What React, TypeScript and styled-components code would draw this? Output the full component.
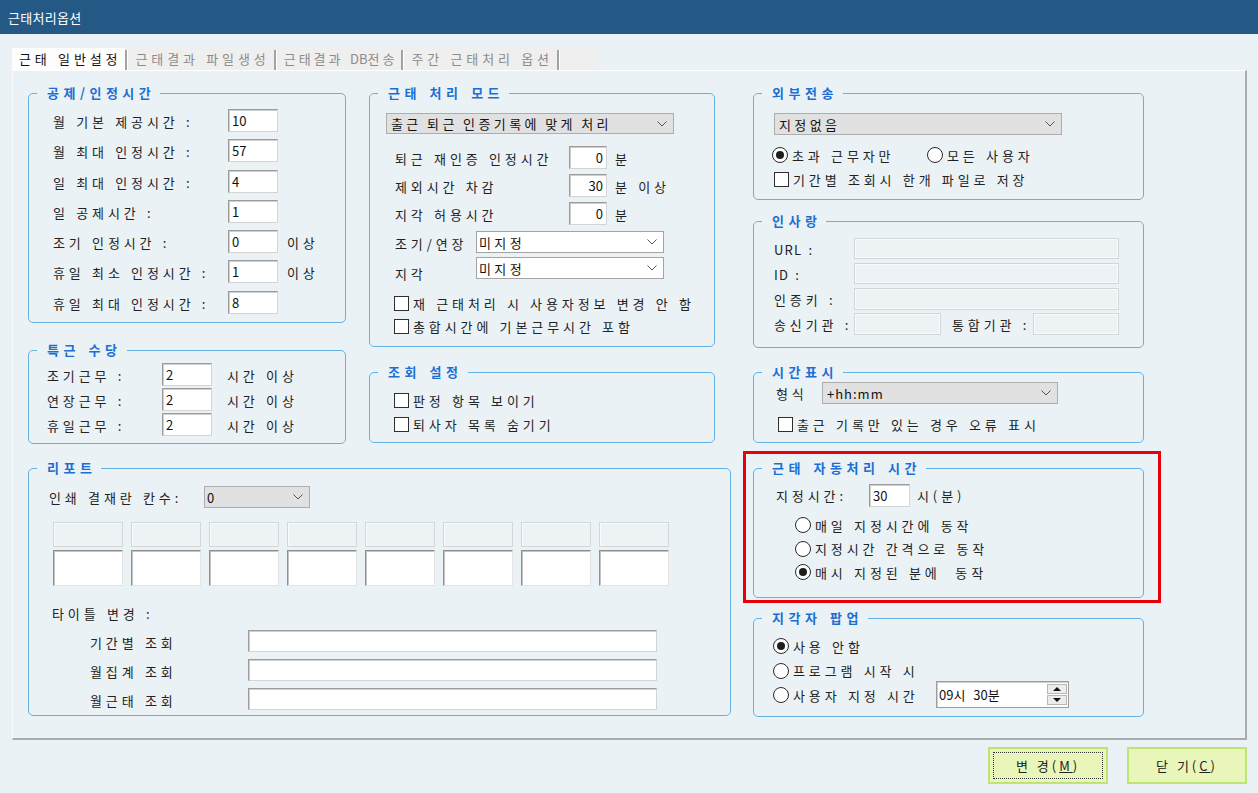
import React from "react";
import styled, { createGlobalStyle } from "styled-components";

const FONT = `"Noto Sans CJK KR", "Noto Sans", sans-serif`;

const GlobalStyle = createGlobalStyle`
  html, body { margin: 0; padding: 0; background: #ebf2f6; }
  body { font-family: ${FONT}; font-size: 13px; color: #222; }
  * { box-sizing: border-box; }
`;

const Window = styled.div`
  width: 1258px;
  height: 793px;
  display: flex;
  flex-direction: column;
  background: #ebf2f6;
  overflow: hidden;
`;

const TitleBar = styled.div`
  height: 34px;
  flex: none;
  background: #245985;
  color: #fff;
  display: flex;
  align-items: center;
  padding-left: 8px;
  font-size: 13px;
  letter-spacing: 0.3px;
`;

const Body = styled.div`
  flex: 1;
  display: flex;
  flex-direction: column;
  padding: 14px 11px 0 12px;
`;

const TabStrip = styled.div`
  display: flex;
  align-items: stretch;
  height: 22px;
  width: 585px;
  background: #efefef;
`;

const Tab = styled.div<{ $active?: boolean; $ls?: number }>`
  display: block;
  line-height: 22px;
  padding: 0 4px 0 7px;
  letter-spacing: ${(p) => p.$ls ?? 3.9}px;
  word-spacing: 0.5px;
  white-space: nowrap;
  color: ${(p) => (p.$active ? "#111" : "#8c8c8c")};
  background: ${(p) => (p.$active ? "#fdfdfd" : "transparent")};
`;

const Latin = styled.span`
  letter-spacing: 0;
`;

const TabSep = styled.div`
  width: 3px;
  margin-top: 2px;
  border-left: 2px solid #a3a3a3;
  border-right: 1px solid #fff;
`;

const Panel = styled.div`
  height: 670px;
  display: flex;
  align-items: flex-start;
  gap: 22px;
  padding: 14px 0 0 15px;
  border-top: 1px solid #fff;
  border-left: 1px solid #f7f9fa;
  border-right: 2px solid #a8acaf;
  border-bottom: 2px solid #a8acaf;
`;

const LeftArea = styled.div`
  width: 703px;
  display: flex;
  flex-direction: column;
  gap: 16px;
`;

const TopRow = styled.div`
  display: flex;
  align-items: flex-start;
  gap: 23px;
`;

const Stack = styled.div<{ $w: number }>`
  width: ${(p) => p.$w}px;
  display: flex;
  flex-direction: column;
`;

const Group = styled.fieldset<{ $h: number; $mt?: number }>`
  margin: ${(p) => p.$mt ?? 0}px 0 0 0;
  padding: 0;
  min-width: 0;
  height: ${(p) => p.$h}px;
  border: 1px solid #63b2e2;
  border-radius: 5px;
`;

const Legend = styled.legend`
  margin-left: 8px;
  padding: 0 5px 0 10px;
  font-size: 13px;
  line-height: 16px;
  font-weight: bold;
  color: #1b6fd3;
  letter-spacing: 4.5px;
  word-spacing: 1.2px;
  white-space: nowrap;
`;

const FormGrid = styled.div<{ $cols: string; $rowH: number; $gap: number; $pad?: string; $mt?: number }>`
  display: grid;
  grid-template-columns: ${(p) => p.$cols};
  grid-auto-rows: ${(p) => p.$rowH}px;
  row-gap: ${(p) => p.$gap}px;
  align-items: center;
  padding: ${(p) => p.$pad ?? "0"};
  margin-top: ${(p) => p.$mt ?? 0}px;
`;

const Text = styled.span`
  font-size: 13px;
  letter-spacing: 3.9px;
  word-spacing: 0.5px;
  white-space: nowrap;
  color: #222;
`;

const Label = styled(Text)<{ $low?: number }>`
  padding-top: ${(p) => p.$low ?? 2}px;
`;

const LatinLabel = styled(Label)`
  letter-spacing: 1.2px;
  word-spacing: 2px;
`;

const Suffix = styled(Text)<{ $ml: number }>`
  margin-left: ${(p) => p.$ml}px;
  align-self: end;
  padding-bottom: 1px;
`;

const Input = styled.input<{ $w: number; $h: number; $right?: boolean }>`
  width: ${(p) => p.$w}px;
  height: ${(p) => p.$h}px;
  margin: 0;
  padding: 0 3px;
  font: 13px ${FONT};
  color: #111;
  text-align: ${(p) => (p.$right ? "right" : "left")};
  background: #fff;
  border: 1px solid;
  border-color: #9b9b9b #d4d4d4 #d4d4d4 #9b9b9b;
  box-shadow: inset 1px 1px 0 #cfcfcf;
  outline: none;
`;

const DisabledBox = styled.div<{ $w: number; $h: number }>`
  width: ${(p) => p.$w}px;
  height: ${(p) => p.$h}px;
  background: #edf2f5;
  border: 1px solid #d2d6d9;
  box-shadow: inset 1px 1px 0 #f8fafb, inset -1px -1px 0 #f8fafb;
`;

const Combo = styled.div<{ $w: number; $h: number; $white?: boolean; $pl?: number }>`
  width: ${(p) => p.$w}px;
  height: ${(p) => p.$h}px;
  display: flex;
  align-items: center;
  justify-content: space-between;
  padding: 0 6px 0 ${(p) => p.$pl ?? 4}px;
  background: ${(p) => (p.$white ? "#fff" : "#e1e1e1")};
  border: 1px solid ${(p) => (p.$white ? "#a3a3a3" : "#adadad")};
`;

const ComboText = styled.span`
  font-size: 13px;
  letter-spacing: 3.4px;
  word-spacing: -1px;
  white-space: nowrap;
  color: #111;
`;

const Chevron = () => (
  <svg width="10" height="6" viewBox="0 0 10 6">
    <polyline points="0.5,0.5 5,5 9.5,0.5" fill="none" stroke="#555" strokeWidth="1" />
  </svg>
);

const Section = styled.div<{ $pad: string }>`
  display: flex;
  flex-direction: column;
  align-items: flex-start;
  padding: ${(p) => p.$pad};
`;

const OptionList = styled.div<{ $gap: number; $mt: number; $ml?: number }>`
  display: flex;
  flex-direction: column;
  gap: ${(p) => p.$gap}px;
  margin-top: ${(p) => p.$mt}px;
  margin-left: ${(p) => p.$ml ?? 0}px;
`;

const OptionRow = styled.div`
  display: flex;
  align-items: center;
`;

const Option = styled.label<{ $w?: number }>`
  display: flex;
  align-items: center;
  gap: 4px;
  width: ${(p) => (p.$w ? `${p.$w}px` : "auto")};
  height: 16px;
`;

const CheckBox = styled.span`
  width: 15px;
  height: 15px;
  flex: none;
  background: #fff;
  border: 1px solid #2e2e2e;
`;

const RadioDot = styled.span<{ $on?: boolean }>`
  width: 16px;
  height: 16px;
  flex: none;
  border-radius: 50%;
  background: #fff;
  border: 1px solid #2a2a2a;
  display: flex;
  align-items: center;
  justify-content: center;
  &::after {
    content: "";
    width: 8px;
    height: 8px;
    border-radius: 50%;
    background: ${(p) => (p.$on ? "#1e1e1e" : "transparent")};
  }
`;

const InlineRow = styled.div<{ $mt?: number; $ml?: number }>`
  display: flex;
  align-items: center;
  margin-top: ${(p) => p.$mt ?? 0}px;
  margin-left: ${(p) => p.$ml ?? 0}px;
`;

const FixedLabel = styled(Text)<{ $w: number }>`
  width: ${(p) => p.$w}px;
  flex: none;
`;

const CellGrid = styled.div`
  display: grid;
  grid-template-columns: repeat(8, 70px);
  grid-template-rows: 25px 36px;
  column-gap: 8px;
  row-gap: 3px;
  margin: 14px 0 0 24px;
`;

const HeadCell = styled.div`
  background: #edf2f5;
  border: 1px solid #d3d7da;
  box-shadow: inset 1px 1px 0 #f9fbfc;
`;

const BoxCell = styled.div`
  background: #fff;
  border: 1px solid;
  border-color: #8f8f8f #e4e4e4 #e4e4e4 #8f8f8f;
  box-shadow: inset 1px 1px 0 #c4c4c4;
`;

const AutoWrap = styled.div`
  position: relative;
  margin-top: 17px;
`;

const RedMark = styled.div`
  position: absolute;
  top: -9px;
  left: -10px;
  right: -17px;
  bottom: -5px;
  border: 3px solid #e8000b;
  pointer-events: none;
`;

const Spin = styled.div`
  width: 133px;
  height: 27px;
  margin: -6px 0 -5px;
  display: flex;
  background: #fff;
  border: 1px solid #9c9c9c;
  box-shadow: inset 1px 1px 0 #d0d0d0;
`;

const SpinText = styled.span`
  flex: 1;
  padding-left: 2px;
  font-size: 13px;
  word-spacing: 5px;
  color: #111;
  display: flex;
  align-items: center;
`;

const SpinButtons = styled.div`
  width: 20px;
  display: flex;
  flex-direction: column;
  gap: 1px;
  margin: 2px 1px 2px 0;
`;

const SpinBtn = styled.div`
  flex: 1;
  background: #ececec;
  border: 1px solid #b8b8b8;
  display: flex;
  align-items: center;
  justify-content: center;
`;

const ButtonRow = styled.div`
  display: flex;
  justify-content: flex-end;
  gap: 19px;
  margin-top: 7px;
`;

const DlgButton = styled.button<{ $focus?: boolean }>`
  width: 120px;
  height: 37px;
  margin: 0;
  padding: 0;
  font: 13px ${FONT};
  letter-spacing: 3px;
  color: #222;
  background: #e8f6ba;
  border: 2px solid #bfe474;
  outline: ${(p) => (p.$focus ? "1px dotted #333" : "none")};
  outline-offset: -6px;
`;

const numRows1: [string, string, string?][] = [
  ["월 기본 제공시간 :", "10"],
  ["월 최대 인정시간 :", "57"],
  ["일 최대 인정시간 :", "4"],
  ["일 공제시간 :", "1"],
  ["조기 인정시간 :", "0", "이상"],
  ["휴일 최소 인정시간 :", "1", "이상"],
  ["휴일 최대 인정시간 :", "8"],
];

const bonusRows = ["조기근무 :", "연장근무 :", "휴일근무 :"];

const modeRows: [string, string, string][] = [
  ["퇴근 재인증 인정시간", "0", "분"],
  ["제외시간 차감", "30", "분 이상"],
  ["지각 허용시간", "0", "분"],
];

const titleRows = ["기간별 조회", "월집계 조회", "월근태 조회"];

const Check = ({ children }: { children: React.ReactNode }) => (
  <Option>
    <CheckBox />
    <Text>{children}</Text>
  </Option>
);

const Radio = ({ on, w, children }: { on?: boolean; w?: number; children: React.ReactNode }) => (
  <Option $w={w}>
    <RadioDot $on={on} />
    <Text>{children}</Text>
  </Option>
);

export default function App() {
  return (
    <>
      <GlobalStyle />
      <Window>
        <TitleBar>근태처리옵션</TitleBar>
        <Body>
          <TabStrip>
            <Tab $active>근태 일반설정</Tab>
            <TabSep />
            <Tab>근태결과 파일생성</Tab>
            <TabSep />
            <Tab $ls={3}>
              근태결과 <Latin>DB</Latin>전송
            </Tab>
            <TabSep />
            <Tab>주간 근태처리 옵션</Tab>
            <TabSep />
          </TabStrip>
          <Panel>
            <LeftArea>
              <TopRow>
                <Stack $w={318}>
                  <Group $h={238}>
                    <Legend>공제/인정시간</Legend>
                    <FormGrid $cols="175px 50px auto" $rowH={23} $gap={7.3} $pad="8px 0 0 24px">
                      {numRows1.map(([l, v, s]) => (
                        <React.Fragment key={l}>
                          <Label>{l}</Label>
                          <Input $w={50} $h={23} defaultValue={v} readOnly />
                          {s ? <Suffix $ml={9}>{s}</Suffix> : <span />}
                        </React.Fragment>
                      ))}
                    </FormGrid>
                  </Group>
                  <Group $h={102} $mt={19}>
                    <Legend>특근 수당</Legend>
                    <FormGrid $cols="115px 50px auto" $rowH={23} $gap={2} $pad="5px 0 0 18px">
                      {bonusRows.map((l) => (
                        <React.Fragment key={l}>
                          <Label>{l}</Label>
                          <Input $w={50} $h={23} defaultValue="2" readOnly />
                          <Label $low={1} style={{ marginLeft: 15 }}>시간 이상</Label>
                        </React.Fragment>
                      ))}
                    </FormGrid>
                  </Group>
                </Stack>
                <Stack $w={346}>
                  <Group $h={262}>
                    <Legend>근태 처리 모드</Legend>
                    <Section $pad="12px 0 0 16px">
                      <Combo $w={288} $h={21}>
                        <ComboText>출근 퇴근 인증기록에 맞게 처리</ComboText>
                        <Chevron />
                      </Combo>
                      <FormGrid $cols="174px 38px auto" $rowH={23} $gap={5} $pad="0 0 0 9px" $mt={12}>
                        {modeRows.map(([l, v, s]) => (
                          <React.Fragment key={l}>
                            <Label>{l}</Label>
                            <Input $w={38} $h={23} $right defaultValue={v} readOnly />
                            <Label style={{ marginLeft: 8 }}>{s}</Label>
                          </React.Fragment>
                        ))}
                      </FormGrid>
                      <FormGrid $cols="81px 188px" $rowH={22} $gap={4} $pad="0 0 0 9px" $mt={6}>
                        <Label style={{ alignSelf: "end" }}>조기/연장</Label>
                        <Combo $w={188} $h={22} $white $pl={2}>
                          <ComboText>미지정</ComboText>
                          <Chevron />
                        </Combo>
                        <Label style={{ alignSelf: "end", marginBottom: -4 }}>지각</Label>
                        <Combo $w={188} $h={22} $white $pl={2}>
                          <ComboText>미지정</ComboText>
                          <Chevron />
                        </Combo>
                      </FormGrid>
                      <OptionList $gap={7} $mt={16} $ml={8}>
                        <Check>재 근태처리 시 사용자정보 변경 안 함</Check>
                        <Check>총합시간에 기본근무시간 포함</Check>
                      </OptionList>
                    </Section>
                  </Group>
                  <Group $h={79} $mt={17}>
                    <Legend>조회 설정</Legend>
                    <Section $pad="4px 0 0 24px">
                      <OptionList $gap={8} $mt={8}>
                        <Check>판정 항목 보이기</Check>
                        <Check>퇴사자 목록 숨기기</Check>
                      </OptionList>
                    </Section>
                  </Group>
                </Stack>
              </TopRow>
              <Group $h={256}>
                <Legend>리포트</Legend>
                <Section $pad="10px 0 0 0">
                  <InlineRow $ml={20}>
                    <FixedLabel $w={155}>인쇄 결재란 칸수:</FixedLabel>
                    <Combo $w={106} $h={22} $pl={2}>
                      <ComboText>0</ComboText>
                      <Chevron />
                    </Combo>
                  </InlineRow>
                  <CellGrid>
                    {Array.from({ length: 8 }).map((_, i) => (
                      <HeadCell key={`h${i}`} />
                    ))}
                    {Array.from({ length: 8 }).map((_, i) => (
                      <BoxCell key={`b${i}`} />
                    ))}
                  </CellGrid>
                  <InlineRow $mt={18} $ml={23}>
                    <Text>타이틀 변경 :</Text>
                  </InlineRow>
                  <FormGrid $cols="158px 409px" $rowH={22} $gap={7} $pad="0 0 0 61px" $mt={7}>
                    {titleRows.map((l) => (
                      <React.Fragment key={l}>
                        <Label>{l}</Label>
                        <Input $w={409} $h={22} readOnly />
                      </React.Fragment>
                    ))}
                  </FormGrid>
                </Section>
              </Group>
            </LeftArea>

            <Stack $w={391}>
              <Group $h={115}>
                <Legend>외부전송</Legend>
                <Section $pad="12px 0 0 20px">
                  <Combo $w={288} $h={22}>
                    <ComboText>지정없음</ComboText>
                    <Chevron />
                  </Combo>
                  <InlineRow $mt={12} $ml={-2}>
                    <Radio on w={155}>초과 근무자만</Radio>
                    <Radio>모든 사용자</Radio>
                  </InlineRow>
                  <OptionList $gap={0} $mt={8}>
                    <Check>기간별 조회시 한개 파일로 저장</Check>
                  </OptionList>
                </Section>
              </Group>
              <Group $h={135} $mt={13}>
                <Legend>인사랑</Legend>
                <Section $pad="9px 0 0 20px">
                  <FormGrid $cols="80px 265px" $rowH={21} $gap={4}>
                    <LatinLabel>URL :</LatinLabel>
                    <DisabledBox $w={265} $h={21} />
                    <LatinLabel>ID :</LatinLabel>
                    <DisabledBox $w={265} $h={21} />
                    <Label>인증키 :</Label>
                    <DisabledBox $w={265} $h={22} />
                  </FormGrid>
                  <InlineRow $mt={4}>
                    <FixedLabel $w={80}>송신기관 :</FixedLabel>
                    <DisabledBox $w={87} $h={22} />
                    <FixedLabel $w={81} style={{ marginLeft: 11 }}>통합기관 :</FixedLabel>
                    <DisabledBox $w={86} $h={22} />
                  </InlineRow>
                </Section>
              </Group>
              <Group $h={79} $mt={16}>
                <Legend>시간표시</Legend>
                <Section $pad="2px 0 0 22px">
                  <InlineRow>
                    <FixedLabel $w={46}>형식</FixedLabel>
                    <Combo $w={236} $h={22}>
                      <ComboText style={{ letterSpacing: 1 }}>+hh:mm</ComboText>
                      <Chevron />
                    </Combo>
                  </InlineRow>
                  <OptionList $gap={0} $mt={12} $ml={2}>
                    <Check>출근 기록만 있는 경우 오류 표시</Check>
                  </OptionList>
                </Section>
              </Group>
              <AutoWrap>
                <Group $h={138}>
                  <Legend>근태 자동처리 시간</Legend>
                  <Section $pad="8px 0 0 22px">
                    <InlineRow>
                      <FixedLabel $w={93}>지정시간:</FixedLabel>
                      <Input $w={41} $h={23} defaultValue="30" readOnly />
                      <Text style={{ marginLeft: 7 }}>시(분)</Text>
                    </InlineRow>
                    <OptionList $gap={7.5} $mt={10} $ml={19}>
                      <Radio>매일 지정시간에 동작</Radio>
                      <Radio>지정시간 간격으로 동작</Radio>
                      <Radio on>매시 지정된 분에 &nbsp;동작</Radio>
                    </OptionList>
                  </Section>
                </Group>
                <RedMark />
              </AutoWrap>
              <Group $h={107} $mt={12}>
                <Legend>지각자 팝업</Legend>
                <Section $pad="12px 0 0 19px">
                  <OptionList $gap={8.5} $mt={0}>
                    <Radio on>사용 안함</Radio>
                    <Radio>프로그램 시작 시</Radio>
                    <OptionRow>
                      <Radio w={163}>사용자 지정 시간</Radio>
                      <Spin>
                        <SpinText>09시 30분</SpinText>
                        <SpinButtons>
                          <SpinBtn>
                            <svg width="8" height="4" viewBox="0 0 8 4">
                              <polygon points="0,4 4,0 8,4" fill="#111" />
                            </svg>
                          </SpinBtn>
                          <SpinBtn>
                            <svg width="8" height="4" viewBox="0 0 8 4">
                              <polygon points="0,0 8,0 4,4" fill="#111" />
                            </svg>
                          </SpinBtn>
                        </SpinButtons>
                      </Spin>
                    </OptionRow>
                  </OptionList>
                </Section>
              </Group>
            </Stack>
          </Panel>
          <ButtonRow>
            <DlgButton $focus>
              변 경(<u>M</u>)
            </DlgButton>
            <DlgButton>
              닫 기(<u>C</u>)
            </DlgButton>
          </ButtonRow>
        </Body>
      </Window>
    </>
  );
}
